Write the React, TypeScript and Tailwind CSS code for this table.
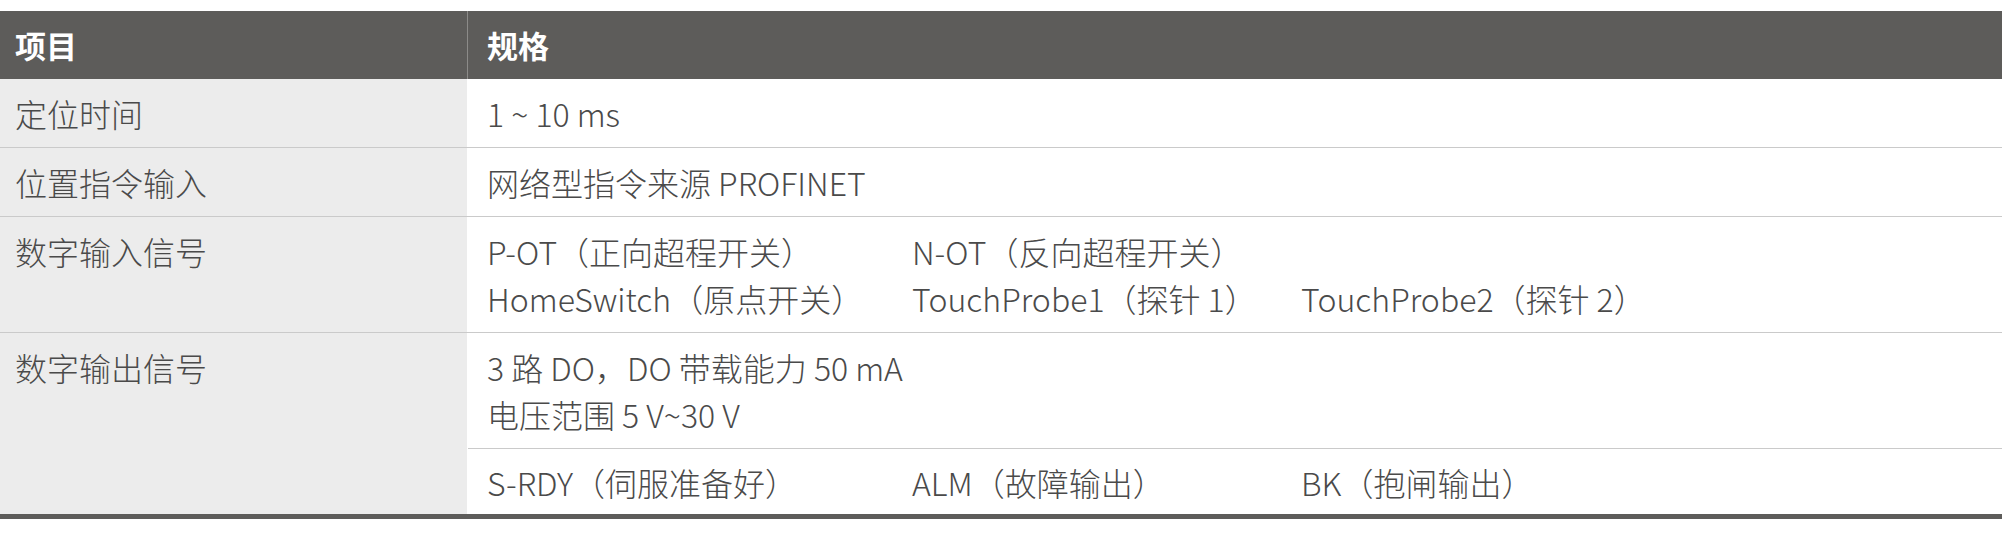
const font = {
  fontFamily: '"Noto Sans CJK SC Light", "Noto Sans CJK SC DemiLight", "Noto Sans CJK SC", "Noto Sans", sans-serif',
};

function Label({ children }: { children: React.ReactNode }) {
  return (
    <div className="w-[468px] shrink-0 bg-[#ececec] border-r border-white px-[15px] pt-[11px] pb-[10px] leading-[47px]">
      {children}
    </div>
  );
}

export default function App() {
  return (
    <div className="bg-white w-[2003px] h-[536px] pt-[11px] text-[32px] text-[#4a4a4a] font-light" style={font}>
      <div className="w-[2002px]">
        {/* header */}
        <div
          className="flex h-[68px] bg-[#5d5c5a] text-white font-bold text-[31px]"
          style={{ fontFamily: '"Noto Sans CJK SC", sans-serif' }}
        >
          <div className="w-[468px] shrink-0 flex items-center px-[15px] border-r border-[#8c8b89]">项目</div>
          <div className="flex items-center pl-[19px]">规格</div>
        </div>

        <div className="flex border-b border-[#cacaca]">
          <Label>定位时间</Label>
          <div className="flex-1 pl-[19px] pt-[11px] pb-[10px] leading-[47px]">1 ~ 10 ms</div>
        </div>

        <div className="flex border-b border-[#cacaca]">
          <Label>位置指令输入</Label>
          <div className="flex-1 pl-[19px] pt-[11px] pb-[10px] leading-[47px]">网络型指令来源 PROFINET</div>
        </div>

        <div className="flex border-b border-[#cacaca]">
          <Label>数字输入信号</Label>
          <div className="flex-1 pl-[19px] pt-[11px] pb-[10px] leading-[47px]">
            <div className="flex">
              <span className="w-[425px]">P-OT（正向超程开关）</span>
              <span>N-OT（反向超程开关）</span>
            </div>
            <div className="flex">
              <span className="w-[425px]">HomeSwitch（原点开关）</span>
              <span className="w-[389px]">TouchProbe1（探针 1）</span>
              <span>TouchProbe2（探针 2）</span>
            </div>
          </div>
        </div>

        <div className="flex">
          <Label>数字输出信号</Label>
          <div className="flex-1 leading-[47px]">
            <div className="pl-[19px] pt-[11px] pb-[10px] border-b border-[#cacaca]">
              <div>3 路 DO，DO 带载能力 50 mA</div>
              <div>电压范围 5 V~30 V</div>
            </div>
            <div className="flex pl-[19px] pt-[10px] pb-[8px]">
              <span className="w-[425px]">S-RDY（伺服准备好）</span>
              <span className="w-[389px]">ALM（故障输出）</span>
              <span>BK（抱闸输出）</span>
            </div>
          </div>
        </div>

        {/* bottom rule */}
        <div className="h-[5px] bg-[#5d5c5a]" />
      </div>
    </div>
  );
}
